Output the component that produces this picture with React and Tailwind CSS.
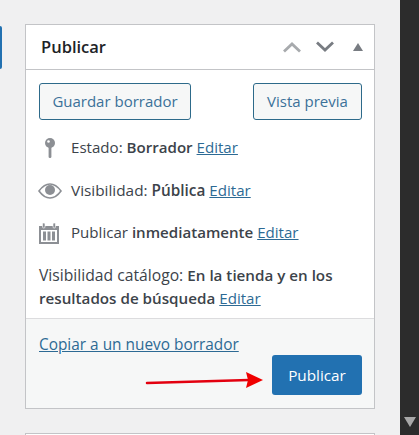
function EditLink() {
  return <a className="text-[15.100px] text-[#2d6a94] underline cursor-pointer">Editar</a>;
}

function Chevron({ up, color }) {
  return (
    <svg width="20" height="12" viewBox="0 0 20 12" style={{ color }}>
      <path d={up ? 'M2 10.500 L10 3 L18 10.500' : 'M2 1.500 L10 9 L18 1.500'} fill="none" stroke="currentColor" strokeWidth="2.800" />
    </svg>
  );
}

function PinIcon() {
  return (
    <svg width="14" height="22" viewBox="0 0 14 22" className="text-[#8c8f94]">
      <circle cx="7" cy="6" r="5" fill="currentColor" />
      <circle cx="5.500" cy="4.500" r="1.300" fill="#fff" />
      <rect x="5.600" y="9" width="2.800" height="12" rx="1.200" fill="currentColor" />
    </svg>
  );
}

function EyeIcon() {
  return (
    <svg width="24" height="16" viewBox="0 0 24 16" className="text-[#8c8f94]">
      <path d="M1 8 C5 2.500 8.500 1 12 1 C15.500 1 19 2.500 23 8 C19 13.500 15.500 15 12 15 C8.500 15 5 13.500 1 8 Z" fill="none" stroke="currentColor" strokeWidth="1.600" />
      <circle cx="12" cy="7" r="5" fill="currentColor" />
    </svg>
  );
}

function CalendarIcon() {
  return (
    <svg width="22" height="22" viewBox="0 0 22 22" className="text-[#8c8f94]">
      <path d="M1 4h20v18H1z" fill="currentColor" />
      <rect x="3" y="8" width="16" height="12" fill="#fff" />
      <rect x="5" y="9.500" width="3" height="9" fill="currentColor" />
      <rect x="9.500" y="9.500" width="3" height="9" fill="currentColor" />
      <rect x="14" y="9.500" width="3" height="9" fill="currentColor" />
      <rect x="4.500" y="1" width="2.500" height="5" rx="1" fill="currentColor" stroke="#fff" strokeWidth="0.600" />
      <rect x="15" y="1" width="2.500" height="5" rx="1" fill="currentColor" stroke="#fff" strokeWidth="0.600" />
    </svg>
  );
}

export default function App() {
  return (
    <div className="flex h-[435px] w-[419px] overflow-hidden bg-[#f0f0f1] font-['Open_Sans',sans-serif] text-[15px] text-[#3c434a]">
      <main className="relative flex flex-1">
        <div className="mt-[26px] h-[43px] w-[2px] rounded-r-sm bg-[#2271b1]" />
        <div className="ml-[23px] w-[350px] pt-[24px]">
          <section className="flex h-[385px] flex-col border border-[#c3c4c7] bg-white">
            <header className="flex h-[45px] shrink-0 items-center justify-between border-b border-[#c3c4c7] pl-[15px] pr-[11px]">
              <h2 className="text-[16.500px] font-semibold text-[#1d2327]">Publicar</h2>
              <div className="flex items-center">
                <Chevron up color="#a7aaad" />
                <span className="ml-[13px]"><Chevron color="#787c82" /></span>
                <span className="ml-[18px] h-0 w-0 border-x-[5px] border-b-[8px] border-x-transparent border-b-[#787c82]" />
              </div>
            </header>

            <div className="px-[13px] pt-[13px]">
              <div className="flex justify-between">
                <button className="h-[37px] w-[152px] rounded-[3px] border border-[#2d6a8a] bg-[#f6f7f7] text-[#3b7199]">Guardar borrador</button>
                <button className="mr-[-1px] h-[37px] w-[109px] rounded-[3px] border border-[#2d6a8a] bg-[#f6f7f7] text-[#3b7199]">Vista previa</button>
              </div>

              <div className="mt-[14px] flex h-[27px] items-center">
                <span className="flex w-[32px] pl-[4px]"><PinIcon /></span>
                <p className="whitespace-nowrap text-[15.100px]">Estado: <b className="font-semibold">Borrador</b> <EditLink /></p>
              </div>
              <div className="mt-[16px] flex h-[27px] items-center">
                <span className="ml-[-1px] flex w-[33px]"><EyeIcon /></span>
                <p className="whitespace-nowrap text-[15.350px]">Visibilidad: <b className="font-semibold">Pública</b> <EditLink /></p>
              </div>
              <div className="mt-[15px] flex h-[27px] items-center">
                <span className="ml-[-1px] flex w-[33px]"><CalendarIcon /></span>
                <p className="whitespace-nowrap text-[15.100px]">Publicar <b className="font-semibold">inmediatamente</b> <EditLink /></p>
              </div>
              <p className="mt-[18px] text-[15.700px] leading-[23px]">
                Visibilidad catálogo: <b className="text-[15.200px] font-semibold">En la tienda y en los resultados de búsqueda</b> <EditLink />
              </p>
            </div>

            <footer className="mt-[8px] flex-1 border-t border-[#dcdcde] bg-[#f6f7f7] px-[13px] pt-[14px]">
              <a className="text-[15.400px] text-[#2d6a94] underline cursor-pointer">Copiar a un nuevo borrador</a>
              <div className="mr-[-1px] mt-[-1px] flex justify-end">
                <button className="h-[40px] w-[90px] rounded-[3px] bg-[#2271b1] text-[15.300px] font-medium text-white">Publicar</button>
              </div>
            </footer>
          </section>
          <div className="mt-[24px] h-[20px] border border-[#c3c4c7] bg-white" />
        </div>

        <svg width="130" height="24" viewBox="0 0 130 24" className="absolute left-[145px] top-[369px]">
          <path d="M2 14 L104 11" stroke="#e3000f" strokeWidth="2.500" fill="none" strokeLinecap="round" />
          <path d="M101 3 L118 11 L101 19 L103 11 Z" fill="#f00000" />
        </svg>
      </main>

      <aside className="flex w-[19px] shrink-0 items-end justify-center bg-[#2c2c2c] pb-[8px]">
        <span className="h-0 w-0 border-x-[6.500px] border-t-[10px] border-x-transparent border-t-[#a8a8a8]" />
      </aside>
    </div>
  );
}
